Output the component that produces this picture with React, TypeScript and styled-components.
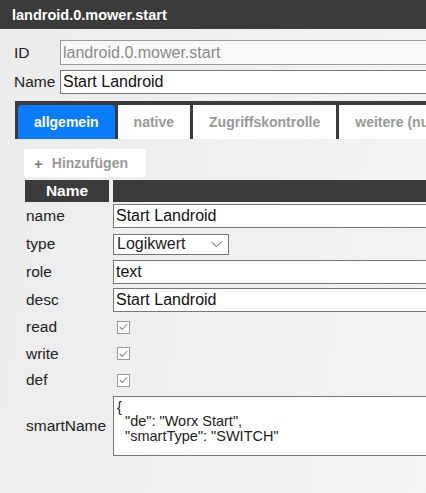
import styled, { createGlobalStyle } from "styled-components";

const GlobalStyle = createGlobalStyle`
  html, body {
    margin: 0;
    padding: 0;
    overflow: hidden;
    background: #efefef;
  }
  body {
    font-family: "Liberation Sans", Arial, sans-serif;
  }
`;

const Dialog = styled.div`
  width: 620px;
  height: 493px;
  background: linear-gradient(100deg, #ececec 0%, #f2f2f2 60%, #f6f6f6 100%);
  color: #222;
`;

const TitleBar = styled.div`
  height: 29px;
  background: #3b3b3b;
  color: #fff;
  font-weight: bold;
  font-size: 14.5px;
  display: flex;
  align-items: center;
  padding-left: 12px;
`;

const Header = styled.div`
  padding: 11px 0 0 14px;
  display: grid;
  grid-template-columns: 46px 1fr;
  row-gap: 5px;
  align-items: center;
`;

const FieldLabel = styled.label`
  font-size: 15.5px;
`;

const TextInput = styled.input<{ $readOnly?: boolean }>`
  box-sizing: border-box;
  height: ${(p) => (p.$readOnly ? "25px" : "24px")};
  width: 100%;
  font-family: inherit;
  font-size: 16px;
  padding: 0 2px;
  border: 1px solid ${(p) => (p.$readOnly ? "#9a9a9a" : "#777")};
  background: ${(p) => (p.$readOnly ? "#f9f9f9" : "#fff")};
  color: ${(p) => (p.$readOnly ? "#8a8a8a" : "#111")};
  outline: none;
`;

const TabBar = styled.div`
  margin: 7px 0 0 15px;
  height: 38px;
  box-sizing: border-box;
  background: #3b3b3b;
  padding: 4px 0 0 3px;
  display: flex;
  gap: 3px;
`;

const Tab = styled.div<{ $active?: boolean }>`
  height: 34px;
  padding: 0 16px;
  box-sizing: border-box;
  display: flex;
  align-items: center;
  justify-content: center;
  white-space: nowrap;
  font-size: 14px;
  font-weight: bold;
  background: ${(p) => (p.$active ? "#0a7cff" : "#fff")};
  color: ${(p) => (p.$active ? "#fff" : "#999")};
  border-radius: ${(p) => (p.$active ? "3px 3px 0 0" : "0")};
`;

const Content = styled.div`
  padding: 10px 0 0 24px;
`;

const AddButton = styled.div`
  width: 122px;
  height: 28px;
  box-sizing: border-box;
  background: #fff;
  border-radius: 3px;
  display: flex;
  align-items: center;
  gap: 9px;
  padding-left: 10px;
  font-size: 14px;
  font-weight: bold;
  color: #999;
`;

const Plus = styled.span`
  font-size: 15px;
  font-weight: bold;
  color: #777;
`;

const Table = styled.div`
  margin-top: 3px;
  margin-left: 1px;
  display: grid;
  grid-template-columns: 84px 1fr;
  column-gap: 4px;
  align-items: center;
`;

const HeadCell = styled.div`
  height: 22px;
  background: #3b3b3b;
  color: #fff;
  font-weight: bold;
  font-size: 15.5px;
  display: flex;
  align-items: center;
  justify-content: center;
`;

const RowLabel = styled.div<{ $h: number }>`
  height: ${(p) => p.$h}px;
  display: flex;
  align-items: center;
  font-size: 15.5px;
  padding-left: 1px;
`;

const RowValue = styled.div<{ $h: number }>`
  height: ${(p) => p.$h}px;
  display: flex;
  align-items: center;
`;

const Select = styled.div`
  box-sizing: border-box;
  width: 116px;
  height: 21px;
  border: 1px solid #777;
  background: #fff;
  display: flex;
  align-items: center;
  justify-content: space-between;
  padding: 0 6px 0 3px;
  font-size: 16px;
`;

const Check = styled.div`
  box-sizing: border-box;
  width: 13px;
  height: 13px;
  margin-left: 4px;
  border: 1px solid #9a9a9a;
  background: #fff;
  display: flex;
  align-items: center;
  justify-content: center;
`;

const TextArea = styled.div`
  box-sizing: border-box;
  width: 100%;
  height: 60px;
  border: 1px solid #777;
  background: #fff;
  font-size: 14.5px;
  line-height: 14.5px;
  padding: 3px 3px;
  white-space: pre;
`;

const Chevron = () => (
  <svg width="11" height="7" viewBox="0 0 11 7">
    <path d="M0.5 0.8 L5.5 5.8 L10.5 0.8" fill="none" stroke="#555" strokeWidth="1" />
  </svg>
);

const Tick = () => (
  <svg width="9" height="8" viewBox="0 0 9 8">
    <path d="M0.8 4 L3.3 6.5 L8.2 1" fill="none" stroke="#888" strokeWidth="1.1" />
  </svg>
);

type Row =
  | { label: string; kind: "text"; value: string }
  | { label: string; kind: "select"; value: string }
  | { label: string; kind: "check" };

const rows: Row[] = [
  { label: "name", kind: "text", value: "Start Landroid" },
  { label: "type", kind: "select", value: "Logikwert" },
  { label: "role", kind: "text", value: "text" },
  { label: "desc", kind: "text", value: "Start Landroid" },
  { label: "read", kind: "check" },
  { label: "write", kind: "check" },
  { label: "def", kind: "check" },
];

const smartName = `{
  "de": "Worx Start",
  "smartType": "SWITCH"`;

const App = () => {
  return (
    <>
      <GlobalStyle />
      <Dialog>
        <TitleBar>landroid.0.mower.start</TitleBar>
        <Header>
          <FieldLabel>ID</FieldLabel>
          <TextInput $readOnly readOnly value="landroid.0.mower.start" />
          <FieldLabel>Name</FieldLabel>
          <TextInput readOnly value="Start Landroid" />
        </Header>
        <TabBar>
          <Tab $active>allgemein</Tab>
          <Tab>native</Tab>
          <Tab>Zugriffskontrolle</Tab>
          <Tab>weitere (nur Experten)</Tab>
        </TabBar>
        <Content>
          <AddButton>
            <Plus>+</Plus>
            Hinzufügen
          </AddButton>
          <Table>
            <HeadCell>Name</HeadCell>
            <HeadCell />
            {rows.map((r, i) => {
              const h = i < 4 ? 28 : 26.5;
              return [
                <RowLabel key={r.label + "l"} $h={h}>
                  {r.label}
                </RowLabel>,
                <RowValue key={r.label + "v"} $h={h}>
                  {r.kind === "text" && <TextInput readOnly value={r.value} />}
                  {r.kind === "select" && (
                    <Select>
                      {r.value}
                      <Chevron />
                    </Select>
                  )}
                  {r.kind === "check" && (
                    <Check>
                      <Tick />
                    </Check>
                  )}
                </RowValue>,
              ];
            })}
            <RowLabel $h={64}>smartName</RowLabel>
            <RowValue $h={64}>
              <TextArea>{smartName}</TextArea>
            </RowValue>
          </Table>
        </Content>
      </Dialog>
    </>
  );
};

export default App;
